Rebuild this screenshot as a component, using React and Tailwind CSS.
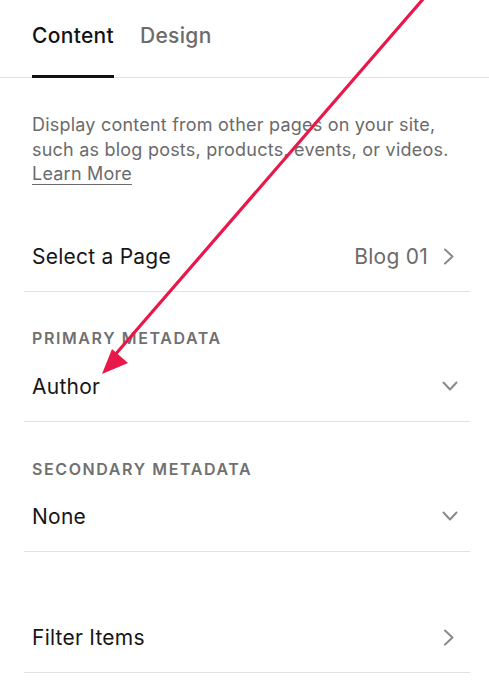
import React from "react";

function ChevronRight() {
  return (
    <svg width="12" height="17" viewBox="0 0 12 17" fill="none">
      <path d="M2 1.5 L9.5 8.5 L2 15.5" stroke="#8a8a8a" strokeWidth="2" strokeLinecap="round" strokeLinejoin="round" />
    </svg>
  );
}

function ChevronDown() {
  return (
    <svg width="16" height="11" viewBox="0 0 16 11" fill="none">
      <path d="M1.5 1.5 L8 8.5 L14.5 1.5" stroke="#8a8a8a" strokeWidth="2" strokeLinecap="round" strokeLinejoin="round" />
    </svg>
  );
}

export default function App() {
  const font = { fontFamily: "Inter, 'Liberation Sans', sans-serif" };
  return (
    <div className="relative w-[489px] h-[700px] bg-white overflow-hidden" style={font}>
      {/* Tabs */}
      <div className="flex h-[78px] border-b border-[#e2e2e2] px-8 gap-[26px]">
        <div className="-mb-px flex items-start pt-[22px] border-b-[3px] border-[#111]">
          <span className="text-[21px] leading-[28px] font-medium tracking-[0.015em] text-[#111]">Content</span>
        </div>
        <div className="flex items-start pt-[22px]">
          <span className="text-[21px] leading-[28px] font-medium tracking-[0.015em] text-[#6b6b6b]">Design</span>
        </div>
      </div>

      {/* Description */}
      <div className="px-8 mt-[35px] text-[18px] leading-[24.5px] tracking-[0.012em] text-[#6b6b6b]">
        <p>
          Display content from other pages on your site,
          <br />
          such as blog posts, products, events, or videos.
        </p>
        <span className="underline decoration-1 underline-offset-[4px]">Learn More</span>
      </div>

      <div className="ml-6 mr-[19px] tracking-[0.015em]">
        {/* Select a Page */}
        <div className="mt-[35px] h-[70px] pl-2 pr-[15px] pt-[1px] flex items-center justify-between border-b border-[#e2e2e2]">
          <span className="text-[21px] leading-[28px] text-[#161616]">Select a Page</span>
          <div className="flex items-center gap-[15px]">
            <span className="text-[21px] leading-[28px] text-[#6b6b6b]">Blog 01</span>
            <ChevronRight />
          </div>
        </div>

        {/* Primary metadata */}
        <div className="pl-2 pr-[12px] pt-[36px] pb-[20px] border-b border-[#e2e2e2]">
          <div className="text-[16px] leading-[20px] font-semibold tracking-[0.1em] text-[#707070]">PRIMARY METADATA</div>
          <div className="mt-[25px] flex items-center justify-between">
            <span className="text-[21px] leading-[28px] text-[#161616]">Author</span>
            <ChevronDown />
          </div>
        </div>

        {/* Secondary metadata */}
        <div className="pl-2 pr-[12px] pt-[37px] pb-[20px] border-b border-[#e2e2e2]">
          <div className="text-[16px] leading-[20px] font-semibold tracking-[0.1em] text-[#707070]">SECONDARY METADATA</div>
          <div className="mt-[24px] flex items-center justify-between">
            <span className="text-[21px] leading-[28px] text-[#161616]">None</span>
            <ChevronDown />
          </div>
        </div>

        {/* Filter Items */}
        <div className="mt-[51px] h-[70px] pl-2 pr-[15px] pt-[1px] flex items-center justify-between border-b border-[#e2e2e2]">
          <span className="text-[21px] leading-[28px] text-[#161616]">Filter Items</span>
          <ChevronRight />
        </div>
      </div>

      {/* Arrow annotation */}
      <svg className="absolute left-0 top-0 pointer-events-none" width="489" height="700" viewBox="0 0 489 700">
        <line x1="424" y1="-2" x2="114" y2="356" stroke="#e8194a" strokeWidth="3.2" strokeLinecap="round" />
        <polygon points="102,374 112,349 128,363" fill="#e8194a" />
      </svg>
    </div>
  );
}
